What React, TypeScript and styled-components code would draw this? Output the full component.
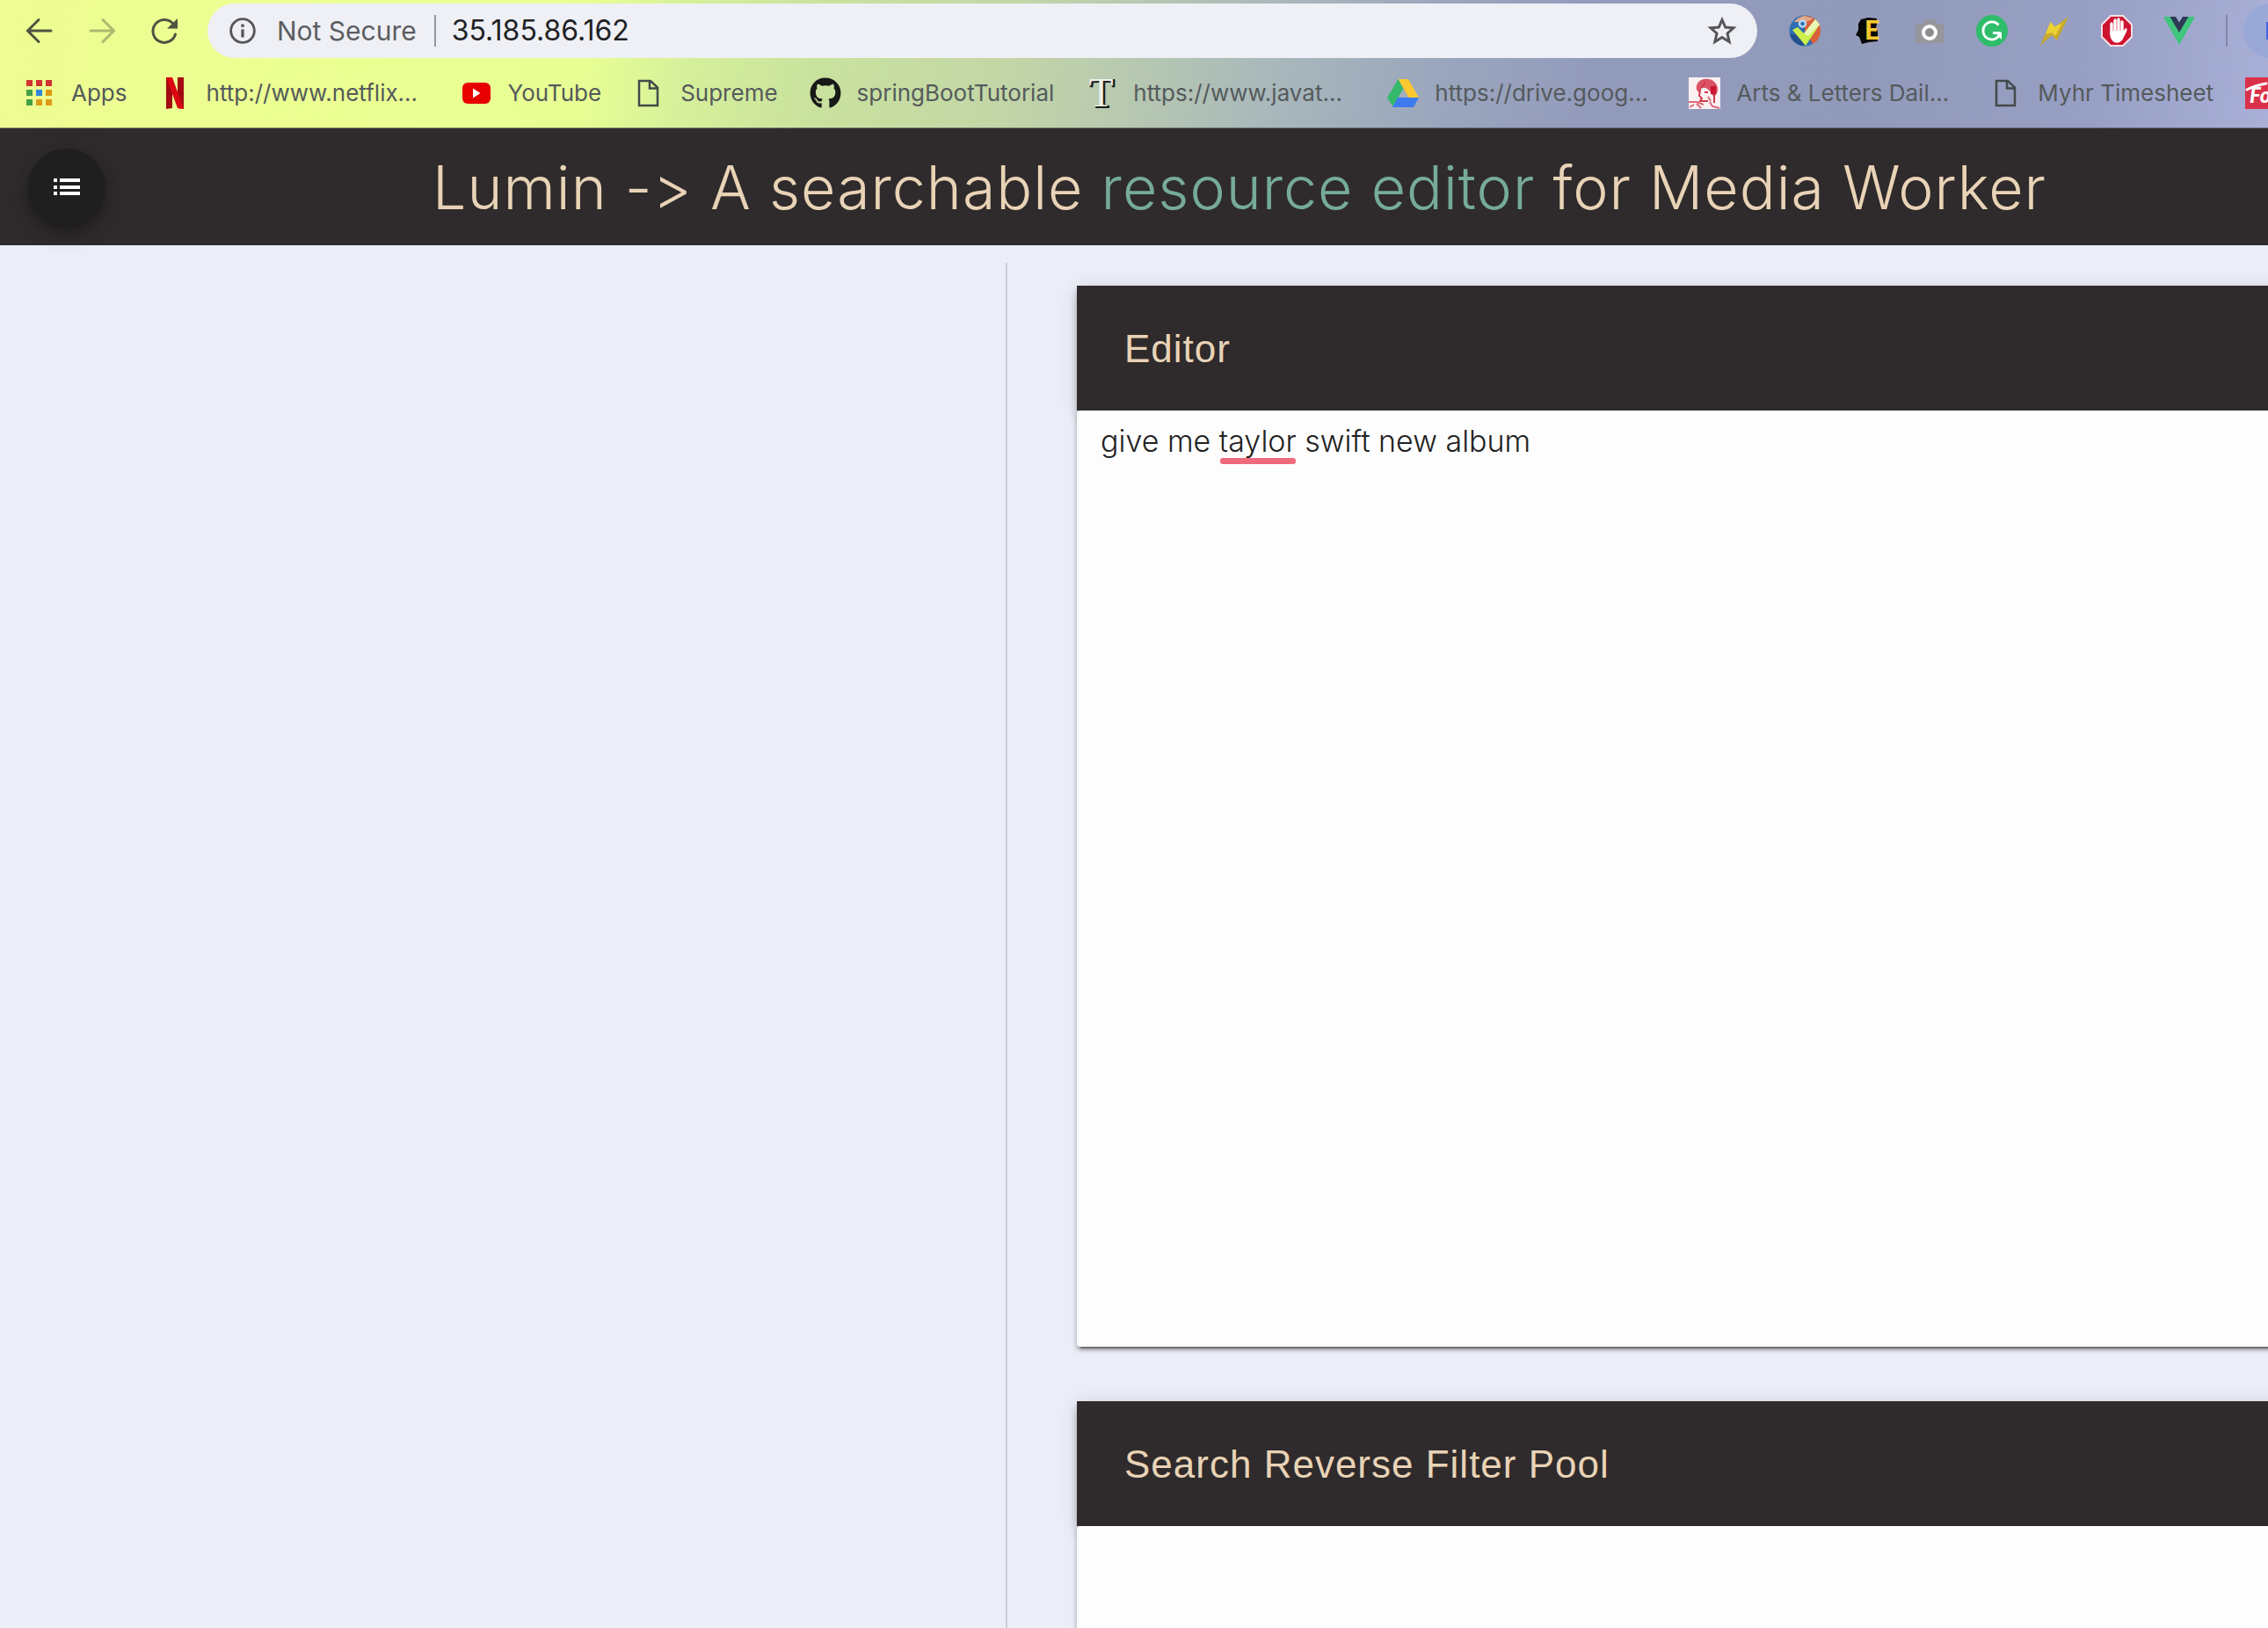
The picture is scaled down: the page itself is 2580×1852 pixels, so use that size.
import React, { useState } from 'react';
import styled, { createGlobalStyle } from 'styled-components';
import { FaGithub } from 'react-icons/fa';

const sans = `Inter, "Liberation Sans", sans-serif`;
const helvetica = `"Liberation Sans", Arial, sans-serif`;

const GlobalStyle = createGlobalStyle`
  *, *::before, *::after { box-sizing: border-box; }
  body {
    margin: 0;
    background: #ebeef7;
    font-family: ${sans};
  }
  button, input, textarea { font-family: inherit; }
`;

const Page = styled.div`
  display: flex;
  flex-direction: column;
  min-height: 100vh;
  overflow: hidden;
`;

/* ---------- browser chrome ---------- */

const Browser = styled.header`
  border-bottom: 1px solid rgba(60, 60, 70, 0.55);
  background: linear-gradient(
    96deg,
    #eefc92 0%,
    #ecff92 12%,
    #e8fe94 26%,
    #d6f19a 30%,
    #c9e29e 36%,
    #c3d7a6 44%,
    #b9cbaf 49%,
    #a9b8bb 56%,
    #9ba7bd 63%,
    #939bbc 70%,
    #929abb 82%,
    #979fc4 92%,
    #a9b0d8 100%
  );
`;

const Toolbar = styled.div`
  display: flex;
  align-items: center;
  height: 70px;
  padding-left: 27px;
  margin-right: -34px;
`;

const NavButtons = styled.nav`
  display: flex;
  gap: 36px;
  margin-right: 29px;
`;

const IconButton = styled.button<{ $size?: number }>`
  display: flex;
  align-items: center;
  justify-content: center;
  flex: none;
  width: ${(p) => p.$size ?? 36}px;
  height: 36px;
  padding: 0;
  border: 0;
  background: none;
  color: #4f5340;
  cursor: pointer;

  &:disabled { opacity: 0.4; }
`;

const Omnibox = styled.form`
  display: flex;
  align-items: center;
  flex: 1;
  height: 62px;
  padding: 0 22px 0 25px;
  border-radius: 31px;
  background: #eff0f5;
  color: #55565b;

  ${IconButton} { color: #55565b; }
`;

const SecurityLabel = styled.label`
  margin-left: 24px;
  padding-right: 20px;
  border-right: 2px solid #97989e;
  font-size: 30px;
  line-height: 36px;
  color: #5c5d62;
  white-space: nowrap;
`;

const AddressInput = styled.input`
  flex: 1;
  min-width: 0;
  margin-left: 18px;
  padding: 0;
  border: 0;
  outline: 0;
  background: none;
  font-size: 32px;
  line-height: 40px;
  color: #202124;
`;

const Extensions = styled.div`
  display: flex;
  align-items: center;
  gap: 35px;
  margin: 0 18px 0 36px;
`;

const Separator = styled.span`
  width: 2px;
  height: 36px;
  background: #8287a2;
`;

const Avatar = styled.button`
  display: flex;
  align-items: center;
  justify-content: center;
  flex: none;
  width: 62px;
  height: 62px;
  padding: 0;
  border: 0;
  border-radius: 50%;
  background: #9aa8d8;

  &::after {
    content: '';
    width: 11px;
    height: 20px;
    background: #4068e0;
  }
`;

const Bookmarks = styled.nav`
  display: flex;
  align-items: center;
  gap: 36px;
  height: 75px;
  padding: 0 0 3px 27px;
`;

const Bookmark = styled.a`
  display: flex;
  align-items: center;
  flex: none;
  gap: 18px;
  font-size: 26px;
  line-height: 36px;
  color: #555a5c;
  text-decoration: none;
  white-space: nowrap;
`;

const BookmarkLabel = styled.span<{ $clipped?: boolean }>`
  width: ${(p) => (p.$clipped ? '253px' : 'auto')};
`;

/* ---------- application ---------- */

const AppBar = styled.div`
  display: flex;
  align-items: center;
  height: 133px;
  padding-left: 32px;
  background: #2f2b2c;
  color: #e9d3b6;
`;

const MenuButton = styled.button`
  display: flex;
  align-items: center;
  justify-content: center;
  flex: none;
  width: 88px;
  height: 88px;
  margin-right: 372px;
  padding: 0;
  border: 0;
  border-radius: 50%;
  background: #1f1f1f;
  color: #fff;
  box-shadow: 0 6px 10px -2px rgba(0, 0, 0, 0.2),
    0 12px 20px rgba(0, 0, 0, 0.14), 0 2px 36px rgba(0, 0, 0, 0.12);
  cursor: pointer;
`;

const Title = styled.h1`
  margin: 0;
  font-size: 68px;
  font-weight: 300;
  line-height: 84px;
  letter-spacing: 1px;
  font-feature-settings: 'calt' 0;
  white-space: nowrap;
`;

const Accent = styled.span`
  color: #76ab99;
`;

const Workspace = styled.div`
  display: grid;
  grid-template-columns: 286fr 359fr;
  flex: 1;
  padding-top: 20px;
`;

const Sidebar = styled.aside`
  min-width: 0;
`;

const Content = styled.main`
  display: flex;
  flex-direction: column;
  gap: 62px;
  min-width: 0;
  margin-right: -16px;
  padding: 26px 0 0 79px;
  border-left: 2px solid #cccfd9;
`;

const Panel = styled.section<{ $grow?: boolean }>`
  display: flex;
  flex-direction: column;
  flex: ${(p) => (p.$grow ? 1 : 'none')};
`;

const PanelHeader = styled.div`
  display: flex;
  align-items: center;
  height: 142px;
  padding: 2px 54px 0;
  background: #2f2b2c;
  box-shadow: 0 4px 8px -2px rgba(0, 0, 0, 0.2),
    0 8px 10px rgba(0, 0, 0, 0.14), 0 2px 20px rgba(0, 0, 0, 0.12);
`;

const PanelTitle = styled.h2`
  margin: 0;
  font-family: ${helvetica};
  font-size: 44px;
  font-weight: 400;
  line-height: 56px;
  letter-spacing: 1px;
  color: #e9d3b6;
`;

const PanelBody = styled.div<{ $square?: boolean }>`
  position: relative;
  display: flex;
  flex: 1;
  border-radius: ${(p) => (p.$square ? '4px 0 0 0' : '4px 0 0 4px')};
  background: #fdfdfe;
  box-shadow: 0 6px 2px -4px rgba(47, 27, 32, 0.5),
    0 4px 4px rgba(0, 0, 0, 0.24), 0 2px 10px rgba(0, 0, 0, 0.12);
`;

const EditorInput = styled.textarea`
  flex: 1;
  height: 1065px;
  padding: 13px 27px;
  border: 0;
  outline: 0;
  background: none;
  resize: none;
  font-size: 34px;
  font-weight: 300;
  line-height: 44px;
  color: #222;
`;

const SpellingMark = styled.span`
  position: absolute;
  top: 54px;
  left: 163px;
  width: 86px;
  height: 7px;
  border-radius: 3px;
  background: #ef6a7c;
  pointer-events: none;
`;

/* ---------- icons ---------- */

const Svg = styled.svg`
  display: block;
  flex: none;
  overflow: visible;
`;

const Glyph = ({ children, box = 36 }: { children: React.ReactNode; box?: number }) => (
  <Svg width={box} height={box} viewBox="0 0 36 36" fill="none" aria-hidden="true">
    {children}
  </Svg>
);

const BackIcon = () => (
  <Glyph>
    <path d="M17 5.500L4.500 18L17 30.500M5 18H31" stroke="currentColor" strokeWidth="3" strokeLinecap="round" />
  </Glyph>
);

const ForwardIcon = () => (
  <Glyph>
    <path d="M18 5.500L30.500 18L18 30.500M30 18H4" stroke="currentColor" strokeWidth="3" strokeLinecap="round" />
  </Glyph>
);

const ReloadIcon = () => (
  <Glyph>
    <path d="M28.500 22A13 13 0 1 1 25 9" stroke="currentColor" strokeWidth="3" strokeLinecap="round" />
    <path d="M31 4V15.500H19Z" fill="currentColor" />
  </Glyph>
);

const InfoIcon = () => (
  <Glyph box={30}>
    <circle cx="18" cy="18" r="16" stroke="currentColor" strokeWidth="3.400" />
    <rect x="16" y="16" width="4" height="11" fill="currentColor" />
    <rect x="16" y="9" width="4" height="4" fill="currentColor" />
  </Glyph>
);

const StarIcon = () => (
  <Glyph>
    <path
      d="M18 5.500L21.800 14L31 14.800L24 21L26.200 30.500L18 25.500L9.800 30.500L12 21L5 14.800L14.200 14Z"
      stroke="currentColor"
      strokeWidth="3"
    />
  </Glyph>
);

const AppsIcon = () => (
  <Glyph>
    {[
      ['#d13232', '#d13232', '#d13232'],
      ['#43a047', '#2f86d9', '#de9a14'],
      ['#43a047', '#de9a14', '#de9a14'],
    ].map((row, y) =>
      row.map((fill, x) => (
        <rect key={`${x}${y}`} x={3 + x * 11} y={3 + y * 11} width="7" height="7" fill={fill} />
      )),
    )}
  </Glyph>
);

const NetflixIcon = () => (
  <Glyph>
    <path d="M8 0H15V35L8 36Z" fill="#a30a12" />
    <path d="M21 0H28V36L21 35Z" fill="#a30a12" />
    <path d="M8 0H15L28 36L21 35Z" fill="#dc0613" />
  </Glyph>
);

const YouTubeIcon = () => (
  <Glyph>
    <rect x="2" y="6" width="32" height="24" rx="6" fill="#e80000" />
    <path d="M14 12.500L22.500 18L14 23.500Z" fill="#fff" />
  </Glyph>
);

const PageIcon = () => (
  <Glyph>
    <path d="M7 4H20L28 11.500V32H7Z" stroke="#434a4a" strokeWidth="2.500" />
    <path d="M19 4V12.500H28" stroke="#434a4a" strokeWidth="2.500" />
  </Glyph>
);

const SerifIcon = () => (
  <Glyph>
    <text x="19" y="34" textAnchor="middle" fontFamily="Liberation Serif, serif" fontSize="46" fill="#1c1c1c" stroke="#1c1c1c" strokeWidth="2">T</text>
    <text x="17.500" y="33" textAnchor="middle" fontFamily="Liberation Serif, serif" fontSize="46" fill="#eef0e8">T</text>
  </Glyph>
);

const DriveIcon = () => (
  <Glyph>
    <path d="M12.500 2H24L36 23H24.500Z" fill="#fbc92f" />
    <path d="M12.500 2L18.500 13L7 34L0 23Z" fill="#35ba6b" />
    <path d="M12 23H36L30 34H6Z" fill="#3f7bf0" />
    <path d="M18.300 13L24 23H12.500Z" fill="#a3adc0" />
  </Glyph>
);

const ArtsIcon = () => (
  <Glyph>
    <rect width="36" height="36" fill="#fbf1f1" />
    <path d="M10 7C13 1 24 0 29 5C34 9 34 16 31 20C29 22 26 21 25 17C22 13 19 11 15 12L12 17C8 15 8 10 10 7Z" fill="#da5365" />
    <path d="M25 10H31V19H25Z" fill="#c9152f" />
    <path d="M29 19V29M13 14L12 21L15 24L13 27L22 27M18 17H22M15 12L19 5" stroke="#cf3a4e" strokeWidth="2" />
    <path d="M0 28H9L17 31M9 30L14 35M1 34L6 31M24 28L27 33L35 35M22 22L25 27" stroke="#dc6a78" strokeWidth="2" />
  </Glyph>
);

const ScriptIcon = () => (
  <Glyph>
    <rect width="36" height="36" fill="#da3148" />
    <path d="M2 14Q12 9 24 7" stroke="#fff" strokeWidth="3" strokeLinecap="round" />
    <text x="5" y="29" fontFamily="Lato, sans-serif" fontStyle="italic" fontWeight="900" fontSize="24" fill="#fff">Fo</text>
  </Glyph>
);

const CheckerIcon = () => (
  <Glyph>
    <circle cx="18" cy="18" r="17.500" fill="#2f6fb4" />
    <path d="M18 1A17 17 0 0 1 27 33L18 18Z" fill="#d9603c" />
    <path d="M1 22A17 17 0 0 0 18 35L10 22Z" fill="#244f8e" />
    <path d="M6 8A17 17 0 0 1 18 1L28 4L20 8Z" fill="#e3a689" />
    <circle cx="15.500" cy="10" r="3.500" stroke="#b9d8f3" strokeWidth="2.500" />
    <path d="M4 17L10 14L17 21L30 5L35 11L19 35Z" fill="#cdf04a" />
    <path d="M17 21L30 5L35 11L22 24Z" fill="#e9f7b4" />
  </Glyph>
);

const LetterBoxIcon = () => (
  <Glyph>
    <path d="M11 5L19 3L29 4V11L28 14L30 18V30L20 31L12 33L9 25L5 23L8 17V10Z" fill="#080808" />
    <text x="15" y="28" fontFamily="Lato, sans-serif" fontWeight="900" fontSize="30" fill="#f6c92e">E</text>
  </Glyph>
);

const CameraIcon = () => (
  <Glyph>
    <path d="M2 10H11V6H15V5H25V10H34V32H2Z" fill="#96969b" />
    <circle cx="18" cy="20" r="7" stroke="#fff" strokeWidth="4" fill="#8b8b90" />
  </Glyph>
);

const CorrectorIcon = () => (
  <Glyph>
    <circle cx="18" cy="18" r="18" fill="#2fbd6b" />
    <path d="M25.500 11.500A10 10 0 1 0 27 22M19 20.500H27" stroke="#fff" strokeWidth="2.800" />
    <path d="M21 19.500H29V28Z" fill="#fff" />
  </Glyph>
);

const BoltIcon = () => (
  <Glyph>
    <path d="M2 35L13.500 8L18.500 13.500L34 2L21 29L15 23Z" fill="#c9a92b" />
    <path d="M8 22L13.500 8L18.500 13.500L27 9L19 24L15 20Z" fill="#ecd335" />
  </Glyph>
);

const StopHandIcon = () => (
  <Glyph>
    <path d="M11 1H25L35 11V25L25 35H11L1 25V11Z" fill="#cf1430" stroke="#f4dfe5" strokeWidth="2" />
    <path d="M12 10V22M16 6V20M20 5V20M24 8V20" stroke="#fff" strokeWidth="3.400" strokeLinecap="round" />
    <path d="M10.400 18H25.600L28 15Q30.500 15 29 19L24 29Q20 33 15 31Q10.400 28 10.400 22Z" fill="#fff" />
  </Glyph>
);

const VueIcon = () => (
  <Glyph>
    <path d="M0 2H8L18 19L28 2H36L18 34Z" fill="#3fc57c" />
    <path d="M7.500 2H14L18 8.500L22 2H28.500L18 20Z" fill="#2c3a55" />
  </Glyph>
);

const ListIcon = () => (
  <Svg width="30" height="20" viewBox="0 0 30 20" fill="currentColor" aria-hidden="true">
    {[0, 8, 15].map((y) => (
      <React.Fragment key={y}>
        <rect y={y} width="4" height="4" />
        <rect x="7" y={y} width="23" height="4" />
      </React.Fragment>
    ))}
  </Svg>
);

/* ---------- data ---------- */

const extensions = [
  { name: 'Checker', Icon: CheckerIcon },
  { name: 'Letterbox', Icon: LetterBoxIcon },
  { name: 'Camera', Icon: CameraIcon },
  { name: 'Grammar', Icon: CorrectorIcon },
  { name: 'Bolt', Icon: BoltIcon },
  { name: 'Blocker', Icon: StopHandIcon },
  { name: 'Vue', Icon: VueIcon },
];

const GithubMark = () => <FaGithub size={36} color="#171a17" />;

const bookmarks = [
  { label: 'Apps', Icon: AppsIcon },
  { label: 'http://www.netflix...', Icon: NetflixIcon, clipped: true },
  { label: 'YouTube', Icon: YouTubeIcon },
  { label: 'Supreme', Icon: PageIcon },
  { label: 'springBootTutorial', Icon: GithubMark },
  { label: 'https://www.javat...', Icon: SerifIcon, clipped: true },
  { label: 'https://drive.goog...', Icon: DriveIcon, clipped: true },
  { label: 'Arts & Letters Dail...', Icon: ArtsIcon, clipped: true },
  { label: 'Myhr Timesheet', Icon: PageIcon },
  { label: '', Icon: ScriptIcon },
];

export default function App() {
  const [address, setAddress] = useState('35.185.86.162');
  const [text, setText] = useState('give me taylor swift new album');

  return (
    <>
      <GlobalStyle />
      <Page>
        <Browser>
          <Toolbar>
            <NavButtons aria-label="History">
              <IconButton aria-label="Back"><BackIcon /></IconButton>
              <IconButton aria-label="Forward" disabled><ForwardIcon /></IconButton>
              <IconButton aria-label="Reload"><ReloadIcon /></IconButton>
            </NavButtons>
            <Omnibox onSubmit={(e) => e.preventDefault()}>
              <IconButton type="button" $size={30} aria-label="Site information"><InfoIcon /></IconButton>
              <SecurityLabel htmlFor="address">Not Secure</SecurityLabel>
              <AddressInput id="address" value={address} onChange={(e) => setAddress(e.target.value)} />
              <IconButton type="button" aria-label="Bookmark this page"><StarIcon /></IconButton>
            </Omnibox>
            <Extensions>
              {extensions.map(({ name, Icon }) => (
                <IconButton key={name} aria-label={name}><Icon /></IconButton>
              ))}
              <Separator />
            </Extensions>
            <Avatar aria-label="Profile" />
          </Toolbar>
          <Bookmarks aria-label="Bookmarks">
            {bookmarks.map(({ label, Icon, clipped }) => (
              <Bookmark key={label} href="#" aria-label={label || 'Bookmark'}>
                <Icon />
                <BookmarkLabel $clipped={clipped}>{label}</BookmarkLabel>
              </Bookmark>
            ))}
          </Bookmarks>
        </Browser>

        <AppBar>
          <MenuButton aria-label="Menu"><ListIcon /></MenuButton>
          <Title>
            Lumin -&gt; A searchable <Accent>resource editor</Accent> for Media Worker
          </Title>
        </AppBar>

        <Workspace>
          <Sidebar />
          <Content>
            <Panel>
              <PanelHeader>
                <PanelTitle as="label" htmlFor="editor">Editor</PanelTitle>
              </PanelHeader>
              <PanelBody>
                <EditorInput
                  id="editor"
                  spellCheck={false}
                  value={text}
                  onChange={(e) => setText(e.target.value)}
                />
                {text.startsWith('give me taylor') && <SpellingMark />}
              </PanelBody>
            </Panel>
            <Panel $grow>
              <PanelHeader>
                <PanelTitle>Search Reverse Filter Pool</PanelTitle>
              </PanelHeader>
              <PanelBody $square />
            </Panel>
          </Content>
        </Workspace>
      </Page>
    </>
  );
}
